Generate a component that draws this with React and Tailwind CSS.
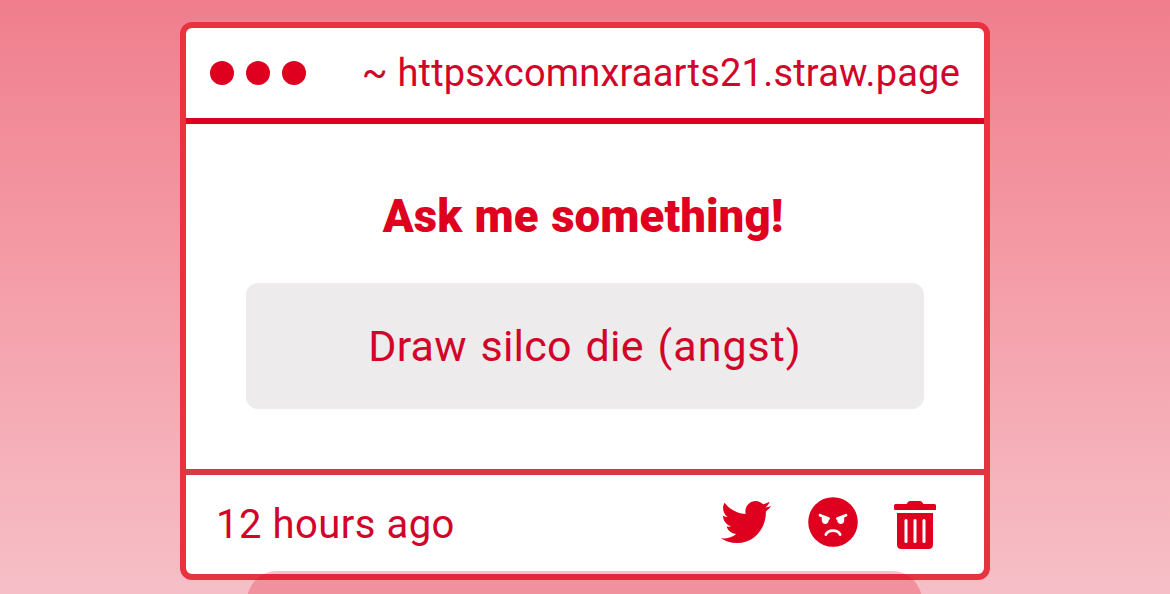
import { FaTwitter } from 'react-icons/fa';

function AngryIcon() {
  return (
    <svg viewBox="0 0 50 50" className="h-[50px] w-[50px]">
      <circle cx="25" cy="25" r="24.8" fill="#df001f" />
      <g fill="none" stroke="#fff" strokeWidth="2.7" strokeLinecap="round">
        <path d="M12 18.2L20.6 21.6" />
        <path d="M38 18.2L29.4 21.6" />
        <path d="M17.8 37.6C20.4 32.4 29.6 32.4 32.2 37.6" />
      </g>
      <path d="M13.8 19.6L20.6 22.2A3.5 3.7 0 1 1 13.8 22.6Z" fill="#fff" />
      <path d="M36.2 19.6L29.4 22.2A3.5 3.7 0 1 0 36.2 22.6Z" fill="#fff" />
    </svg>
  );
}

function TrashIcon() {
  return (
    <svg viewBox="0 0 42 48" className="h-12 w-[42px]">
      <g fill="#df001f">
        <path d="M1.5 3H12.6L14 1Q14.8 0 16 0H26Q27.2 0 28 1L29.4 3H40.5Q42 3 42 4.5V9H1.5Q0 9 0 7.5V4.5Q0 3 1.5 3Z" />
        <path d="M3 12H39V43.5Q39 48 34.5 48H7.5Q3 48 3 43.5Z" />
      </g>
      <g stroke="#fff" strokeWidth="3" strokeLinecap="round">
        <path d="M12 19.5V40.5" />
        <path d="M21 19.5V40.5" />
        <path d="M30 19.5V40.5" />
      </g>
    </svg>
  );
}

export default function App() {
  return (
    <div className="relative h-[594px] w-[1170px] overflow-hidden bg-linear-to-b from-[#f07e8d] to-[#f6bfc7] pt-[22px] font-['Roboto',sans-serif] text-[#d2042a]">
      <main className="mx-auto flex h-[558px] w-[810px] flex-col rounded-xl border-6 border-[#e6333f] bg-white">
        {/* Title bar */}
        <header className="flex h-24 items-center justify-between border-b-6 border-[#df001f] pr-6 pl-6">
          <div className="flex gap-3">
            <span className="size-6 rounded-full bg-[#df001f]" />
            <span className="size-6 rounded-full bg-[#df001f]" />
            <span className="size-6 rounded-full bg-[#df001f]" />
          </div>
          <span className="text-[38px] leading-none tracking-[0.2px] whitespace-nowrap">
            ~ httpsxcomnxraarts21.straw.page
          </span>
        </header>

        {/* Question */}
        <section className="flex h-[345px] flex-col items-center pt-[66px]">
          <h1 className="mr-1 text-[45.5px] leading-[54px] font-black tracking-[0.1px] whitespace-nowrap text-[#df001f] [word-spacing:1px]">
            Ask me something!
          </h1>
          <div className="mt-[39px] flex h-[126px] w-[678px] items-center justify-center rounded-xl bg-[#edebec] text-[43px] whitespace-nowrap">
            <p className="tracking-[0.2px] [word-spacing:3px]">
              Draw silco die <span className="tracking-[1px]">(angst)</span>
            </p>
          </div>
        </section>

        {/* Footer */}
        <footer className="flex h-[105px] items-center border-t-6 border-[#dc3744] pl-[30px]">
          <span className="text-[40px] leading-none tracking-[0.5px] whitespace-nowrap">12 hours ago</span>
          <div className="mr-12 ml-auto flex items-center">
            <FaTwitter preserveAspectRatio="none" className="mr-px mb-[5px] h-[52px] w-[50px] text-[#df001f]" />
            <div className="mb-[5px] ml-9">
              <AngryIcon />
            </div>
            <div className="ml-9">
              <TrashIcon />
            </div>
          </div>
        </footer>
      </main>

      {/* Next bubble peeking in over the card */}
      <div className="absolute top-[571px] left-[247px] h-20 w-[675px] rounded-[30px] bg-[#e4001e]/24" />
    </div>
  );
}
